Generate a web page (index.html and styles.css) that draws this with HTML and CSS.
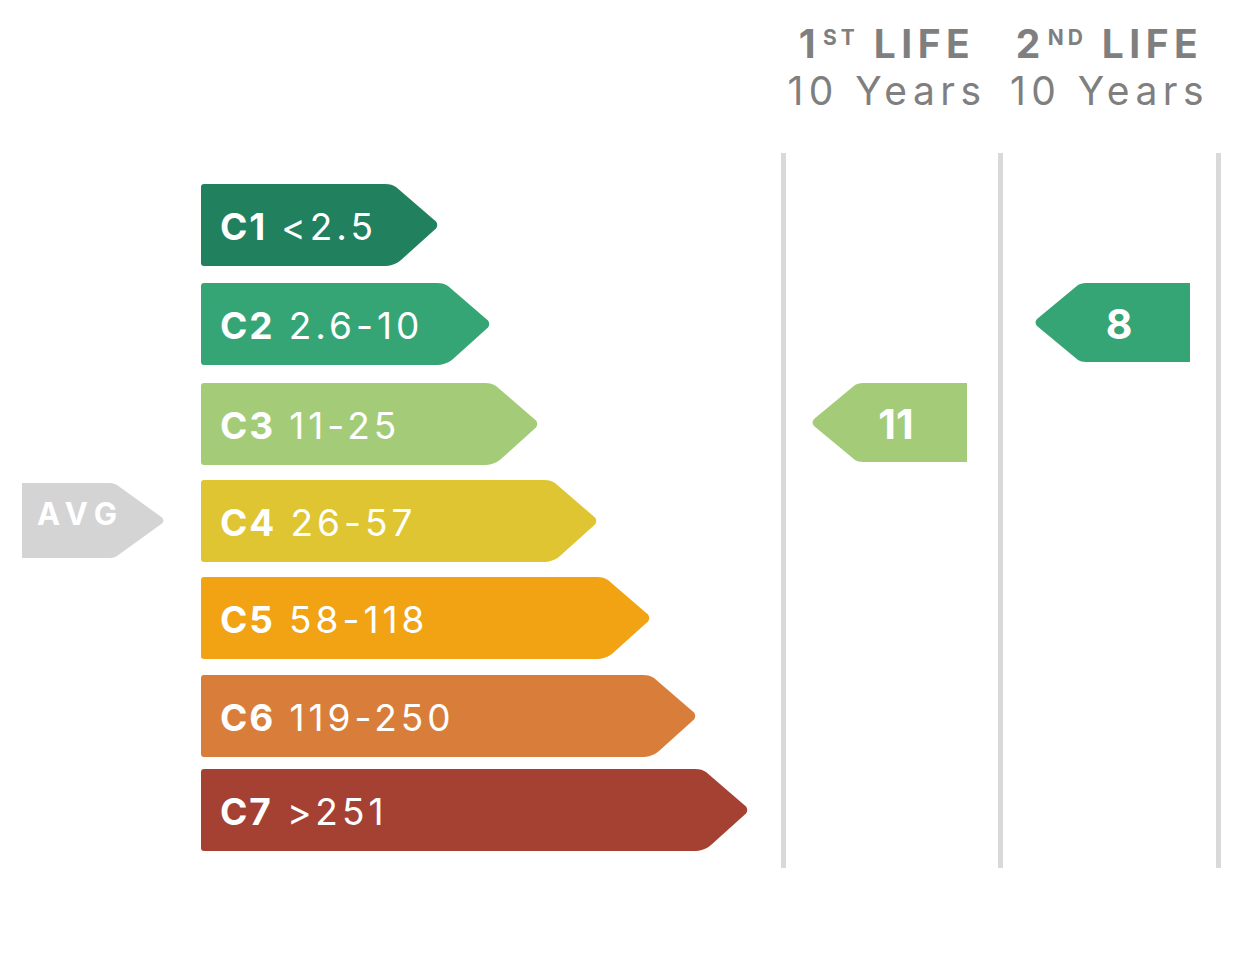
FILE: index.html
```html
<!DOCTYPE html>
<html lang="en">
<head>
<meta charset="utf-8">
<title>Carbon classes</title>
<link rel="stylesheet" href="styles.css">
</head>
<body>
<div class="chart">
  <div class="head head-1">
    <div class="head-title">1<sup>ST</sup> LIFE</div>
    <div class="head-sub">10 Years</div>
  </div>
  <div class="head head-2">
    <div class="head-title">2<sup>ND</sup> LIFE</div>
    <div class="head-sub">10 Years</div>
  </div>

  <div class="rule rule-a"></div>
  <div class="rule rule-b"></div>
  <div class="rule rule-c"></div>

  <div class="bar c1"><span class="bar-label"><b>C1</b> &lt;2.5</span></div>
  <div class="bar c2"><span class="bar-label"><b>C2</b> 2.6-10</span></div>
  <div class="bar c3"><span class="bar-label"><b>C3</b> 11-25</span></div>
  <div class="bar c4"><span class="bar-label"><b>C4</b> 26-57</span></div>
  <div class="bar c5"><span class="bar-label"><b>C5</b> 58-118</span></div>
  <div class="bar c6"><span class="bar-label"><b>C6</b> 119-250</span></div>
  <div class="bar c7"><span class="bar-label"><b>C7</b> &gt;251</span></div>

  <div class="avg">AVG</div>

  <div class="marker marker-life1 c3">11</div>
  <div class="marker marker-life2 c2">8</div>
</div>
</body>
</html>
```
FILE: styles.css
```css
* { box-sizing: border-box; }

html, body {
  margin: 0;
  background: #ffffff;
}

body {
  font-family: Inter, "Noto Sans", "Liberation Sans", sans-serif;
  color: #ffffff;
}

.chart {
  display: grid;
  padding: 17px 0 0 22px;
  grid-template-columns: 179px 580px 5px 212px 5px 213px 5px;
  grid-template-rows: auto 31px 99px 100px 97px 97px 98px 94px 82px 17px;
}

/* ---------- headers ---------- */
.head {
  grid-row: 1;
  margin-bottom: 38px;
  color: #7f7f7f;
  text-align: center;
  line-height: 49px;
  white-space: nowrap;
}
.head-1 { grid-column: 3 / 6; padding-right: 10px; }
.head-2 { grid-column: 5 / 8; }

.head-title {
  padding-top: 2px;
  font-size: 39px;
  font-weight: 700;
  letter-spacing: 5.5px;
}
.head-title sup {
  font-size: 21px;
  letter-spacing: 4px;
  vertical-align: 13px;
  line-height: 0;
  margin-left: 2px;
}
.head-sub {
  margin-top: -2px;
  font-size: 39px;
  font-weight: 400;
  letter-spacing: 5.5px;
}

/* ---------- vertical rules ---------- */
.rule {
  grid-row: 2 / -1;
  background: #d9d9d9;
}
.rule-a { grid-column: 3; }
.rule-b { grid-column: 5; }
.rule-c { grid-column: 7; }

/* ---------- class bars ---------- */
.c1 { --fill: #21805d; }
.c2 { --fill: #36a576; }
.c3 { --fill: #a4cc78; }
.c4 { --fill: #dec531; }
.c5 { --fill: #f1a313; }
.c6 { --fill: #d97e3a; }
.c7 { --fill: #a54133; }

.bar {
  grid-column: 2;
  display: flex;
  height: 82px;
}
.bar.c1 { grid-row: 3; width: 237px; }
.bar.c2 { grid-row: 4; width: 289px; }
.bar.c3 { grid-row: 5; width: 337px; }
.bar.c4 { grid-row: 6; width: 396px; }
.bar.c5 { grid-row: 7; width: 449px; }
.bar.c6 { grid-row: 8; width: 495px; }
.bar.c7 { grid-row: 9; width: 547px; }

.bar-label {
  flex: 1;
  display: flex;
  align-items: center;
  padding: 3px 0 0 19px;
  background: var(--fill);
  border-radius: 3px 0 0 3px;
  font-size: 37px;
  font-weight: 400;
  letter-spacing: 4px;
  white-space: nowrap;
}
.bar-label b {
  font-weight: 700;
  letter-spacing: 2px;
  margin-right: 14px;
}

.bar::after {
  content: "";
  flex: 0 0 58px;
  height: 82px;
  background: var(--fill);
  clip-path: path("M0 0 H5 C10 0 13 1 16 3 L56 37.5 Q58.5 41 56 44.5 L21 76 C16 80 11 82 3 82 H0 Z");
}

/* ---------- average marker ---------- */
.avg {
  grid-column: 1;
  grid-row: 6;
  align-self: start;
  justify-self: start;
  margin-top: 3px;
  width: 143px;
  height: 75px;
  padding: 0 26px 14px 0;
  display: flex;
  align-items: center;
  justify-content: center;
  background: #d4d4d4;
  clip-path: path("M0 0 H88 C91 0 93 1 95 2 L140 34.5 Q143 37.5 140 40.5 L95 73 C93 74 91 75 88 75 H0 Z");
  font-size: 31px;
  font-weight: 700;
  letter-spacing: 7px;
}

/* ---------- life markers ---------- */
.marker {
  align-self: start;
  justify-self: start;
  width: 156px;
  height: 79px;
  padding: 3px 0 0 14px;
  display: flex;
  align-items: center;
  justify-content: center;
  background: var(--fill);
  clip-path: path("M156 0 V79 H52 C48 79 46 78 44 77 L3 43 Q0 39.5 3 36 L44 2 C46 1 48 0 52 0 Z");
  font-size: 41px;
  font-weight: 700;
}
.marker-life1 { grid-column: 4; grid-row: 5; margin-left: 25px; }
.marker-life2 { grid-column: 6; grid-row: 4; margin-left: 31px; }
```
